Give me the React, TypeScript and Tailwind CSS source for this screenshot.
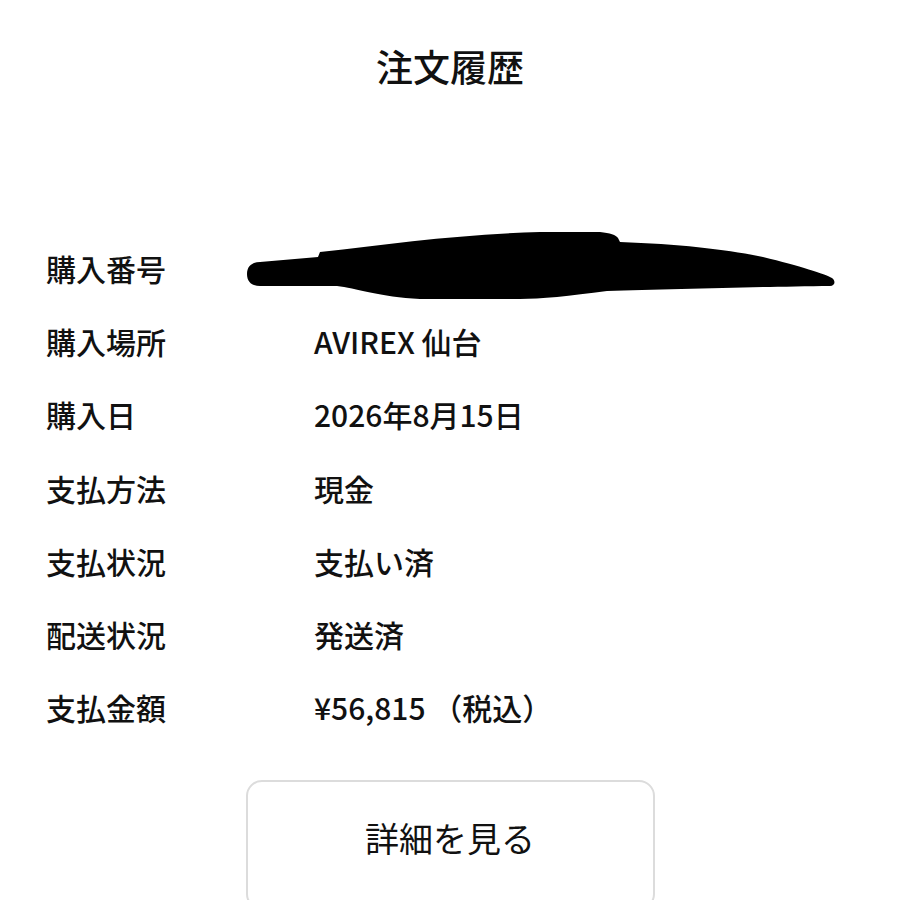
import React from "react";

const rows: { label: string; value: string }[] = [
  { label: "購入番号", value: "" },
  { label: "購入場所", value: "AVIREX 仙台" },
  { label: "購入日", value: "2026年8月15日" },
  { label: "支払方法", value: "現金" },
  { label: "支払状況", value: "支払い済" },
  { label: "配送状況", value: "発送済" },
  { label: "支払金額", value: "¥56,815 （税込）" },
];

function Scribble() {
  // hand-drawn redaction blob over the order number
  return (
    <svg
      className="absolute left-[-74px] top-[-45px] pointer-events-none"
      width="600"
      height="80"
      viewBox="0 0 600 80"
    >
      <path
        d="M7 50 C7 42 12 38 20 38 L78 33 L80 28 C150 20 220 10 300 8 L360 8 C370 9 376 11 378 14 L380 18 C440 20 490 26 523 33 C560 42 585 50 592 54 C596 57 595 62 590 62 C570 62 540 63 523 63 C470 64 410 66 367 67 C330 72 300 75 280 75 L180 75 C140 73 115 64 97 62 L20 62 C12 62 7 58 7 50 Z"
        fill="#000"
      />
    </svg>
  );
}

export default function App() {
  return (
    <div
      className="w-[900px] bg-white text-[#111]"
      style={{ fontFamily: '"Noto Sans CJK JP", "Noto Sans", sans-serif' }}
    >
      {/* Header */}
      <div className="h-[134px] flex items-center justify-center">
        <h1 className="text-[37px] font-medium">注文履歴</h1>
      </div>

      {/* Detail rows */}
      <div className="mt-[98px] pl-[46px]">
        {rows.map((row) => (
          <div key={row.label} className="h-[73.2px] flex items-center text-[30px] font-medium">
            <div className="w-[268px] shrink-0">{row.label}</div>
            <div className="relative flex-1">
              {row.label === "購入番号" ? <Scribble /> : row.value}
            </div>
          </div>
        ))}
      </div>

      {/* Button */}
      <div className="mt-[36px] flex justify-center">
        <button className="w-[409px] h-[130px] border-2 border-[#dcdcdc] rounded-[16px] flex justify-center items-start pt-[30px] text-[34px]">
          詳細を見る
        </button>
      </div>
    </div>
  );
}
